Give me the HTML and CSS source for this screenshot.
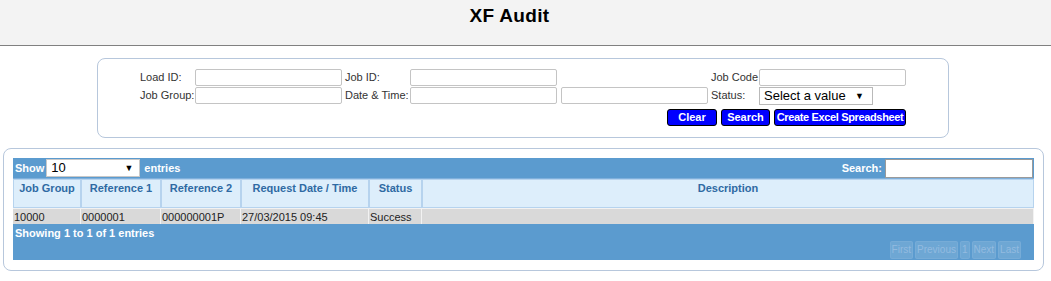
FILE: index.html
```html
<!DOCTYPE html>
<html lang="en">
<head>
<meta charset="utf-8">
<title>XF Audit</title>
<link rel="stylesheet" href="styles.css">
</head>
<body>
<header class="topbar">
  <h1 class="title">XF Audit</h1>
</header>

<section class="filter">
  <div class="filter-grid">
    <label class="lbl">Load ID:</label>
    <input class="fld" type="text">
    <label class="lbl">Job ID:</label>
    <input class="fld" type="text">
    <span></span>
    <label class="lbl">Job Code</label>
    <input class="fld" type="text">

    <label class="lbl">Job Group:</label>
    <input class="fld" type="text">
    <label class="lbl">Date &amp; Time:</label>
    <input class="fld" type="text">
    <input class="fld" type="text">
    <label class="lbl">Status:</label>
    <span class="sel-wrap status-sel"><select class="sel"><option>Select a value</option></select></span>
  </div>
  <div class="actions">
    <button class="btn btn-clear">Clear</button>
    <button class="btn btn-search">Search</button>
    <button class="btn btn-excel">Create Excel Spreadsheet</button>
  </div>
</section>

<section class="results">
  <div class="bar">
    <span class="bar-text">Show</span>
    <span class="sel-wrap len-sel"><select class="sel"><option>10</option></select></span>
    <span class="bar-text">entries</span>
    <span class="spacer"></span>
    <span class="bar-text">Search:</span>
    <input class="search-fld" type="text">
  </div>
  <table class="grid">
    <colgroup>
      <col class="c1"><col class="c2"><col class="c3"><col class="c4"><col class="c5"><col>
    </colgroup>
    <thead>
      <tr>
        <th>Job Group</th>
        <th>Reference 1</th>
        <th>Reference 2</th>
        <th>Request Date / Time</th>
        <th>Status</th>
        <th>Description</th>
      </tr>
    </thead>
    <tbody>
      <tr>
        <td>10000</td>
        <td>0000001</td>
        <td>000000001P</td>
        <td>27/03/2015 09:45</td>
        <td>Success</td>
        <td></td>
      </tr>
    </tbody>
  </table>
  <div class="foot">
    <div class="info">Showing 1 to 1 of 1 entries</div>
    <div class="pager">
      <span class="pg">First</span>
      <span class="pg">Previous</span>
      <span class="pg">1</span>
      <span class="pg">Next</span>
      <span class="pg">Last</span>
    </div>
  </div>
</section>
</body>
</html>
```

FILE: styles.css
```css
* { box-sizing: border-box; }

body {
  margin: 0;
  background: #ffffff;
  font-family: "Liberation Sans", Arial, sans-serif;
  font-size: 11px;
  color: #222222;
}

.topbar {
  height: 46px;
  background: #f3f3f3;
  border-bottom: 1px solid #808080;
  padding: 5px 32px 0 0;
}

.title {
  margin: 0;
  text-align: center;
  font-size: 19px;
  line-height: 22px;
  font-weight: bold;
  color: #000000;
  letter-spacing: 0.3px;
}

/* ---------- filter panel ---------- */
.filter {
  width: 852px;
  margin: 12px 0 0 97px;
  border: 1px solid #b7c7dc;
  border-radius: 8px;
  padding: 10px 0 11px 42px;
}

.filter-grid {
  display: grid;
  grid-template-columns: 55px 150px 65px 151px 150px 48px 147px;
  grid-auto-rows: 17px;
  row-gap: 1px;
  width: 766px;
  align-items: center;
}

.lbl {
  font-size: 11px;
  color: #333333;
  white-space: nowrap;
  line-height: 17px;
}

.fld {
  width: 147px;
  height: 17px;
  border: 1px solid #c4c4c4;
  border-radius: 2px;
  background: #ffffff;
  padding: 0 2px;
  font: 11px "Liberation Sans", Arial, sans-serif;
}

.sel-wrap {
  position: relative;
  display: inline-block;
}

.sel-wrap::after {
  content: "\25BC";
  position: absolute;
  top: 50%;
  transform: translateY(-50%);
  font-size: 9px;
  color: #000000;
  pointer-events: none;
}

.sel {
  -webkit-appearance: none;
  appearance: none;
  display: block;
  background: #ffffff;
  border: 1px solid #a9a9a9;
  border-radius: 0;
  font: 13px "Liberation Sans", Arial, sans-serif;
  color: #000000;
  padding: 0 4px;
  outline: none;
}

.status-sel { width: 114px; height: 18px; margin-top: 1px; }
.status-sel .sel { width: 114px; height: 18px; line-height: 16px; border-color: #b9b9b9; }
.status-sel::after { right: 9px; }

.actions {
  display: flex;
  justify-content: flex-end;
  gap: 4px;
  width: 766px;
  margin-top: 5px;
}

.btn {
  height: 17px;
  background: #0000ff;
  color: #ffffff;
  border: 1px solid #000000;
  border-radius: 3px;
  font: bold 11px "Liberation Sans", Arial, sans-serif;
  padding: 0;
  line-height: 15px;
  white-space: nowrap;
}

.btn-clear { width: 50px; }
.btn-search { width: 49px; }
.btn-excel { width: 132px; letter-spacing: -0.35px; }

/* ---------- results panel ---------- */
.results {
  width: 1041px;
  margin: 10px 0 0 3px;
  border: 1px solid #b7c7dc;
  border-radius: 8px;
  padding: 9px 9px 10px 9px;
}

.bar {
  display: flex;
  align-items: center;
  height: 21px;
  background: #5b9bcf;
  padding: 0 1px 0 2px;
  border-bottom: 1px solid #7fb0dc;
}

.bar-text {
  color: #ffffff;
  font-weight: bold;
  font-size: 11px;
}

.len-sel { width: 94px; height: 18px; margin: 0 4px 0 2px; }
.len-sel .sel { width: 94px; height: 18px; line-height: 16px; border-color: #c8c8c8; font-size: 13px; }
.len-sel::after { right: 7px; }

.spacer { flex: 1; }

.search-fld {
  width: 148px;
  height: 19px;
  margin-left: 3px;
  border: 1px solid #9a9a9a;
  background: #ffffff;
  padding: 0 2px;
}

.grid {
  width: 100%;
  table-layout: fixed;
  border-collapse: separate;
  border-spacing: 0;
}

.c1 { width: 68px; }
.c2 { width: 80px; }
.c3 { width: 80px; }
.c4 { width: 128px; }
.c5 { width: 53px; }

.grid th {
  height: 29px;
  background: #ddeefb;
  border: 1px solid #b6d3ee;
  color: #2f6aa3;
  font-size: 11px;
  font-weight: bold;
  text-align: center;
  vertical-align: top;
  padding: 2px 1px 0;
  white-space: nowrap;
}

.grid td {
  height: 16px;
  background: #d9d9d9;
  border-right: 1px solid #f2f2f2;
  border-top: 1px solid #f2f2f2;
  color: #222222;
  font-size: 11px;
  line-height: 14px;
  padding: 0 1px;
  white-space: nowrap;
}

.foot {
  height: 36px;
  background: #5b9bcf;
  padding: 2px 13px 1px 2px;
  display: flex;
  flex-direction: column;
  justify-content: space-between;
}

.info {
  color: #ffffff;
  font-weight: bold;
  font-size: 11px;
  line-height: 14px;
}

.pager {
  display: flex;
  justify-content: flex-end;
  gap: 2px;
}

.pg {
  height: 18px;
  line-height: 16px;
  padding: 0 1px;
  font-size: 10px;
  color: #93bbe0;
  background: rgba(255, 255, 255, 0.12);
  border: 1px solid rgba(255, 255, 255, 0.06);
  border-radius: 2px;
}
```
